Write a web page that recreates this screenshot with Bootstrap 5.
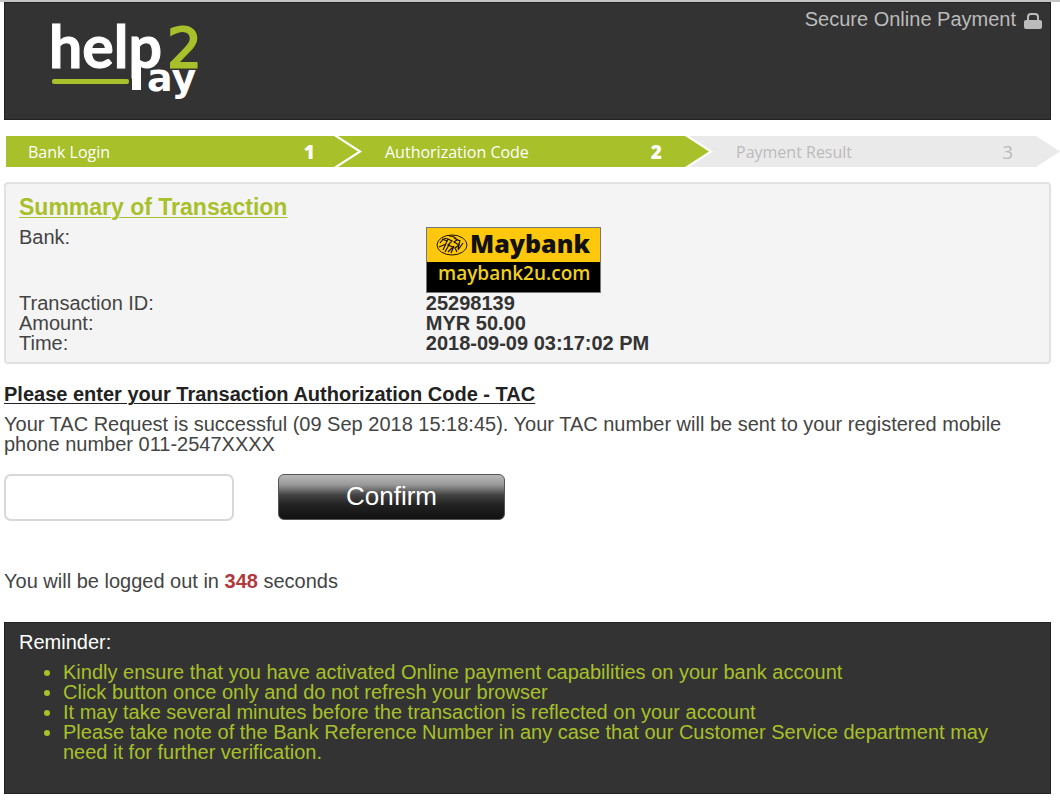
<!DOCTYPE html>
<html lang="en">
<head>
<meta charset="utf-8">
<meta name="viewport" content="width=device-width, initial-scale=1">
<title>help2pay - Authorization Code</title>
<link rel="stylesheet" href="https://cdn.jsdelivr.net/npm/bootstrap@5.3.0/dist/css/bootstrap.min.css">
<style>
  body { font: 20px/20px "Liberation Sans", Arial, sans-serif; color: #444; background: #fff; border-top: 2px solid #c4c4c4; }
  .page { padding: 0 9px 6px 4px; }
  .site-head { background: #333; height: 118px; border: 1px solid #222; padding: 6px 8px 0 40px; }
  .secure { color: #bbb; }
  .steps { margin: 16px -9px 15px 2px; font-family: "Open Sans", "Noto Sans", sans-serif; font-size: 16px; }
  .step { height: 31px; background: #a8c02a; color: #fff; padding: 0 47px; margin-left: -20px;
    flex: 1 1 371px;
    clip-path: polygon(0 0, calc(100% - 24px) 0, 100% 50%, calc(100% - 24px) 100%, 0 100%, 24px 50%); }
  .step:first-child { flex-basis: 352px; padding: 0 43px 0 22px; margin-left: 0;
    clip-path: polygon(0 0, calc(100% - 24px) 0, 100% 50%, calc(100% - 24px) 100%, 0 100%); }
  .step b { font-size: 19px; font-weight: 800; }
  .step.todo { background: #eaeaea; color: #bbb; }
  .step.todo b { font-weight: 400; }
  .summary { background: #f4f4f4; border: 2px solid #e2e2e2; border-radius: 4px; padding: 11px 13px 9px; }
  .summary h2 { font-size: 23px; line-height: 24px; color: #a8c02a; margin-bottom: 8px; }
  .summary dt { font-weight: 400; width: 40%; }
  .summary dd { font-weight: 700; color: #333; width: 60%; margin: 0; }
  .bank-logo { width: 175px; height: 66px; border: 1px solid #777; }
  h1 { font-size: 20px; line-height: 20px; font-weight: 700; color: #222; margin: 20px 0 10px; }
  h1 label, .summary h2 { text-decoration: underline; text-decoration-thickness: 1px; text-underline-offset: 2px; }
  .tac { width: 230px; height: 47px; border: 2px solid #d8d8d8; border-radius: 7px; }
  .confirm { width: 227px; height: 46px; margin-left: 44px; border: 1px solid #555; border-radius: 6px; color: #fff; font-size: 26px; line-height: 30px; padding: 0 0 2px;
    background: linear-gradient(#b8b8b8 0, #999 22%, #444 45%, #222 68%, #111 100%); }
  .confirm:hover { color: #fff; }
  .timer { margin: 50px 0 31px; }
  .timer b { color: #b03a3e; }
  .reminder { background: #333; border: 1px solid #222; color: #fff; padding: 9px 40px 31px 14px; }
  .reminder p { margin-bottom: 10px; }
  .reminder ul { color: #a8c02a; padding-left: 44px; }
  .reminder li::marker { font-size: 20px; }
</style>
</head>
<body>
<div class="page">
  <header class="site-head d-flex justify-content-between align-items-start">
    <svg width="170" height="100" viewBox="0 0 170 100" role="img" aria-label="help2pay" font-family="Lato, sans-serif">
      <text x="4" y="59" font-size="59" font-weight="700" fill="#fff" stroke="#fff">help</text>
      <text x="122" y="58" font-size="55" font-family="DejaVu Sans, sans-serif" fill="#a8c02a" stroke="#a8c02a" stroke-width="2">2</text>
      <rect x="87" y="52" width="9" height="29" fill="#fff"/>
      <text x="102" y="82" font-size="38" font-family="DejaVu Sans, sans-serif" font-weight="700" fill="#fff">ay</text>
      <rect x="7" y="70" width="77" height="5" rx="2" fill="#a8c02a"/>
    </svg>
    <div class="secure d-flex gap-2">
      <span>Secure Online Payment</span>
      <svg class="mt-1" width="18" height="16" viewBox="0 0 18 16" aria-hidden="true"><path d="M4 8V4q0-3 3-3h4q3 0 3 3v4" fill="none" stroke="#bbb" stroke-width="2"/><rect y="7" width="18" height="9" rx="2" fill="#bbb"/></svg>
    </div>
  </header>

  <nav class="steps d-flex" aria-label="Payment steps">
    <div class="step d-flex justify-content-between align-items-center"><span>Bank Login</span><b>1</b></div>
    <div class="step d-flex justify-content-between align-items-center"><span>Authorization Code</span><b>2</b></div>
    <div class="step todo d-flex justify-content-between align-items-center"><span>Payment Result</span><b>3</b></div>
  </nav>

  <section class="summary">
    <h2 class="fw-bold">Summary of Transaction</h2>
    <dl class="d-flex flex-wrap mb-0">
      <dt>Bank:</dt>
      <dd>
        <svg class="bank-logo d-block" viewBox="0 0 173 64" role="img" aria-label="Maybank maybank2u.com">
          <rect width="173" height="34" fill="#ffc80c"/><rect y="34" width="173" height="30" fill="#000"/>
          <g fill="none" stroke="#1a1400">
            <ellipse cx="25" cy="17" rx="15" ry="10"/>
            <path d="M13 15q4-6 8-4l-5 11M15 11l5 2M12 19l7-3M22 8q6 0 8 4l-3 2 5 3-4 3 2 4M21 11l4 2-4 4 5 2-5 5M18 24l5-9M27 10l6 3M33 12l-2 9M36 15l-5 7M24 25l3-7" stroke-width="1.2"/>
          </g>
          <text x="43" y="25" font-family="Open Sans, sans-serif" font-size="25" font-weight="800" fill="#111">Maybank</text>
          <text x="11" y="52" font-family="Open Sans, sans-serif" font-size="19" font-weight="600" fill="#f0cf20">maybank2u.com</text>
        </svg>
      </dd>
      <dt>Transaction ID:</dt><dd>25298139</dd>
      <dt>Amount:</dt><dd>MYR 50.00</dd>
      <dt>Time:</dt><dd>2018-09-09 03:17:02 PM</dd>
    </dl>
  </section>

  <form>
    <h1><label for="tac">Please enter your Transaction Authorization Code - TAC</label></h1>
    <p class="mb-3 pb-1">Your TAC Request is successful (09 Sep 2018 15:18:45). Your TAC number will be sent to your registered mobile phone number 011-2547XXXX</p>
    <div class="d-flex">
      <input class="tac form-control" id="tac" type="text">
      <button class="confirm btn" type="button">Confirm</button>
    </div>
  </form>

  <p class="timer">You will be logged out in <b>348</b> seconds</p>

  <section class="reminder">
    <p>Reminder:</p>
    <ul class="mb-0">
      <li>Kindly ensure that you have activated Online payment capabilities on your bank account</li>
      <li>Click button once only and do not refresh your browser</li>
      <li>It may take several minutes before the transaction is reflected on your account</li>
      <li>Please take note of the Bank Reference Number in any case that our Customer Service department may need it for further verification.</li>
    </ul>
  </section>
</div>
<script src="https://cdn.jsdelivr.net/npm/bootstrap@5.3.0/dist/js/bootstrap.bundle.min.js"></script>
</body>
</html>
